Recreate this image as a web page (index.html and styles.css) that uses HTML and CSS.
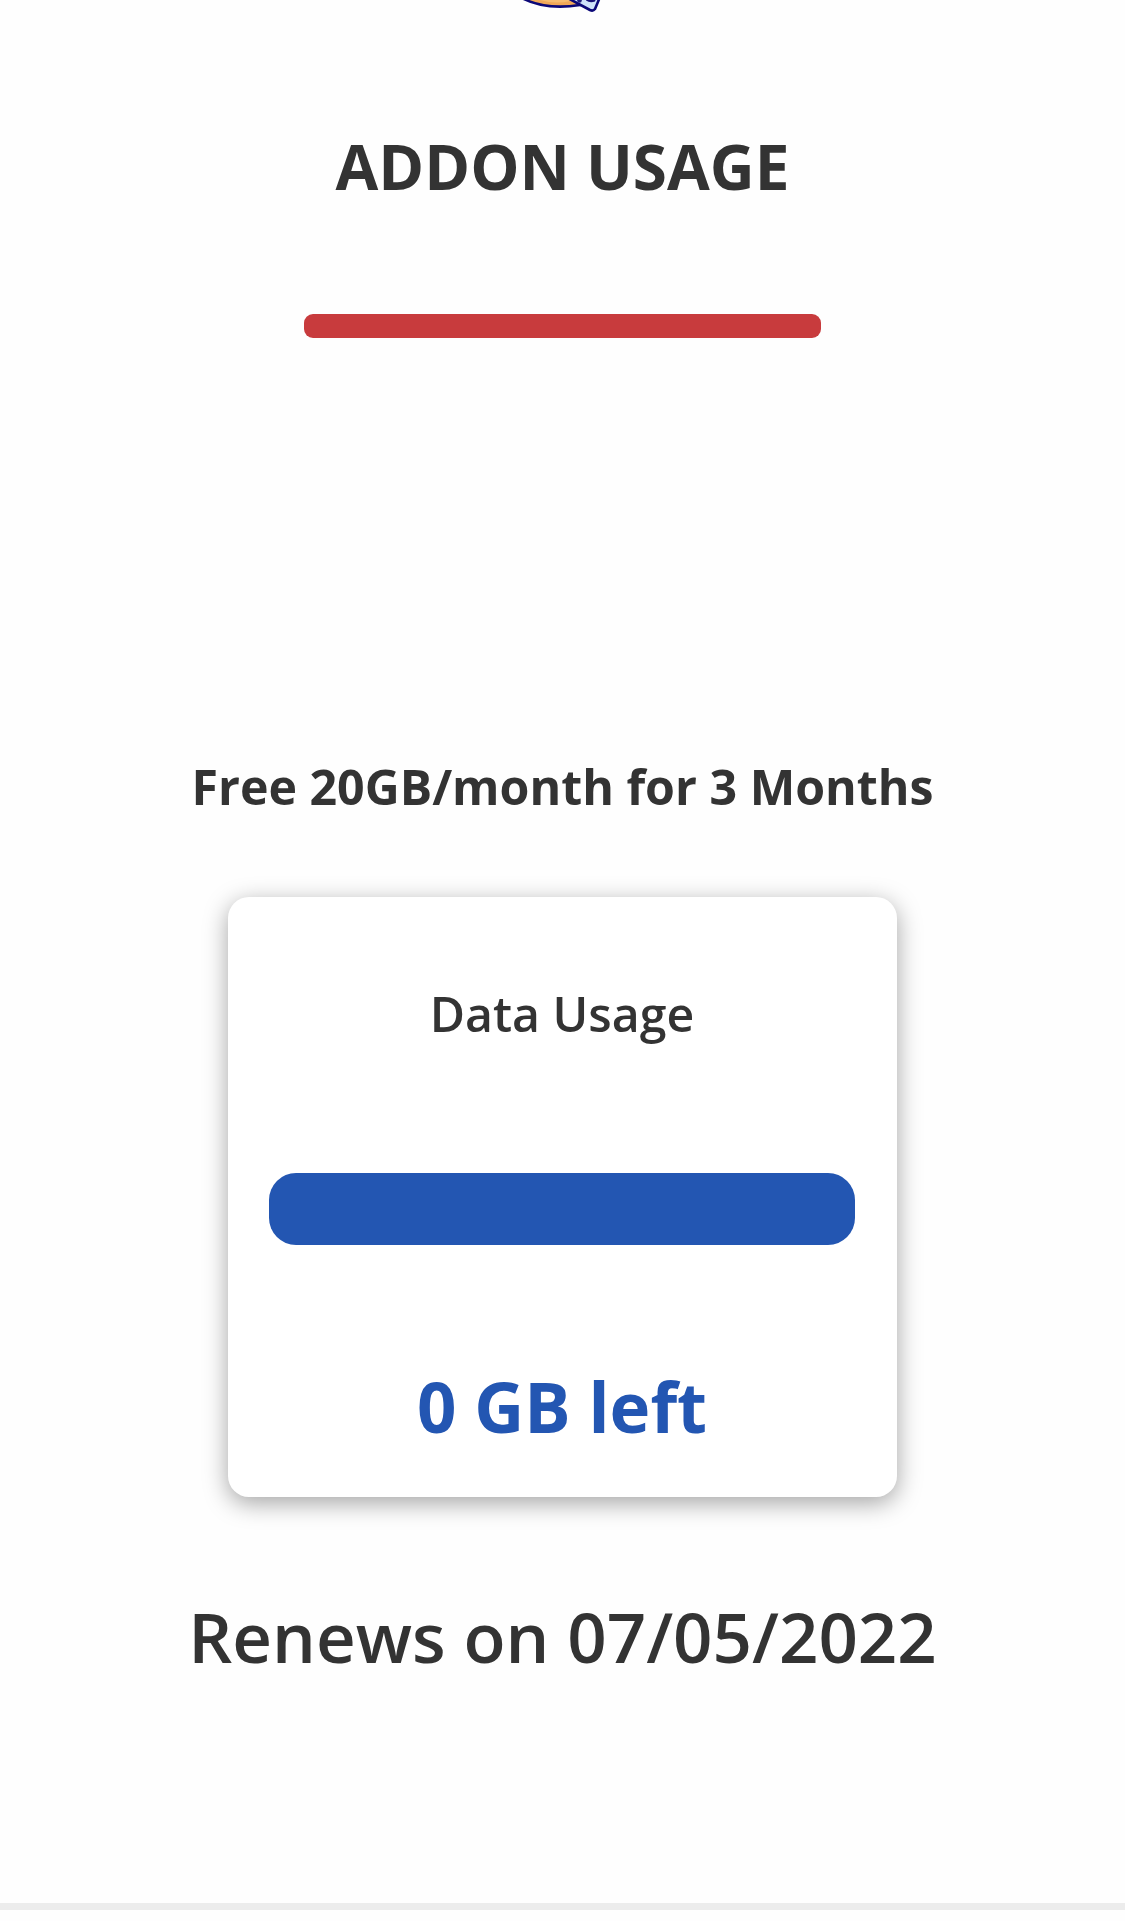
FILE: index.html
```html
<!DOCTYPE html>
<html lang="en">
<head>
<meta charset="UTF-8" />
<title>Addon Usage</title>
<meta name="viewport" content="width=device-width, initial-scale=1" />
<link rel="stylesheet" href="styles.css">
</head>
<body>

<div class="logo">
  <svg width="120" height="30" viewBox="0 0 120 30">
    <path d="M20 -3 C36 6 58 8.5 80 5 L84 -10Z" fill="#f0a858" stroke="#0b0878" stroke-width="2.6"/>
    <path d="M40 0 Q56 4.5 70 1 L70 -4 L40 -4Z" fill="#f7bc70"/>
    <path d="M64 -4 L90 10 Q93 11.5 95 9 L100 -3Z" fill="#cfe3fa" stroke="#0b0878" stroke-width="2.6" stroke-linejoin="round"/>
    <circle cx="79.5" cy="0.5" r="2.3" fill="#211f7c"/>
    <path d="M87 -2 L86 0.5 Q90 3.5 95 1.5 L96 -1Z" fill="#171277"/>
  </svg>
</div>

<h1 class="page-title">ADDON USAGE</h1>
<div class="divider"></div>

<h2 class="addon-name">Free 20GB/month for 3 Months</h2>
<div class="usage-card">
  <div class="usage-title">Data Usage</div>
  <div class="usage-bar"></div>
  <div class="usage-left">0 GB left</div>
</div>
<div class="renew-date">Renews on 07/05/2022</div>

<div class="footer-line"></div>

</body>
</html>
```
FILE: styles.css
```css
* { box-sizing: border-box; }
body { font-family: "Open Sans", sans-serif; background: #fefefe; color: #333; margin: 0; height: 1921px; display: flex; flex-direction: column; align-items: center; overflow: hidden; text-align: center; white-space: nowrap; }
body > * { flex-shrink: 0; }
.logo { width: 125px; height: 30px; }
.logo svg { display: block; }
.page-title { margin: 96px 0 0; font-size: 62px; line-height: 80px; font-weight: 700; }
.divider { width: 517px; height: 24px; margin-top: 108px; background: #c83b3d; border-radius: 9px; }
.addon-name { margin: 418px 0 0; font-size: 48.3px; line-height: 60px; font-weight: 700; }
.usage-card { width: 669px; height: 600px; margin-top: 81px; padding: 86px 42px 0 41px; background: #fff; border-radius: 21px; box-shadow: 0 6px 24px rgba(0,0,0,0.36); }
.usage-title { font-size: 48.2px; line-height: 60px; font-weight: 600; }
.usage-bar { height: 72px; margin-top: 130px; background: #2356b2; border-radius: 27px; }
.usage-left { height: 80px; margin-top: 121px; color: #2356b2; font-size: 69px; line-height: 80px; font-weight: 700; }
.renew-date { margin-top: 99px; font-size: 69px; line-height: 80px; font-weight: 600; }
.footer-line { width: 100%; height: 7px; margin-top: 227px; background: #ececec; }
```
